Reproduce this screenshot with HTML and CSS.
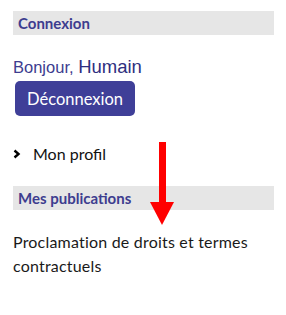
FILE: index.html
```html
<!DOCTYPE html>
<html lang="fr">
<head>
    <meta charset="UTF-8">
    <meta name="viewport" content="width=device-width, initial-scale=1.0">
    <title>Compte</title>
    <link rel="stylesheet" href="styles.css">
</head>
<body>
    <div class="sidebar">
        <h2 class="block-title">Connexion</h2>

        <div class="greeting">
            Bonjour, <span class="user">Humain</span>
        </div>
        <button class="logout">Déconnexion</button>

        <ul class="links">
            <li>
                <svg class="chevron" width="8" height="10" viewBox="0 0 8 10">
                    <polyline points="1.5,1.5 5.5,5 1.5,8.5" fill="none" stroke="#000" stroke-width="2.4"/>
                </svg>
                Mon profil
            </li>
        </ul>

        <h2 class="block-title">Mes publications</h2>

        <p class="pub">Proclamation de droits et termes contractuels</p>

        <!-- flèche ajoutée par dessus la capture -->
        <div class="arrow"></div>
    </div>
</body>
</html>
```

FILE: styles.css
```css
*{
    box-sizing: border-box;
}

body{
    margin: 0;
    background-color: white;
    font-family: "Lato", "Noto Sans", sans-serif;
}

.sidebar{
    position: relative;
    width: 274px;
    padding: 11px 0 0 13px;
}

.block-title{
    margin: 0;
    height: 24px;
    line-height: 24px;
    padding-left: 5px;
    background-color: #e6e6e6;
    color: #3d3d8f;
    font-size: 15px;
    font-weight: bold;
}

.greeting{
    margin-top: 22px;
    font-family: "Liberation Sans", Arial, sans-serif;
    font-size: 16.5px;
    line-height: 20px;
    color: #3d3d8f;
}

.user{
    font-size: 18.5px;
    color: #2f2f80;
}

.logout{
    display: block;
    margin: 4px 0 0 2px;
    width: 120px;
    height: 35px;
    border: none;
    border-radius: 5px;
    background-color: #3f3f98;
    color: white;
    font-family: "Lato", sans-serif;
    font-size: 16.5px;
}

.links{
    list-style: none;
    margin: 28px 0 0 0;
    padding: 0;
    font-size: 16px;
    color: #111;
}

.links li{
    display: flex;
    align-items: center;
    gap: 12px;
}

.chevron{
    flex: none;
}

.links + .block-title{
    margin-top: 23px;
}

.pub{
    margin: 20px 0 0 0;
    font-size: 16px;
    line-height: 24px;
    letter-spacing: 0.2px;
    color: #1a1a1a;
}

.arrow{
    position: absolute;
    left: 159px;
    top: 142px;
    width: 7px;
    height: 62px;
    background-color: #f00;
}

.arrow::after{
    content: "";
    position: absolute;
    left: -9px;
    top: 60px;
    border-left: 12.5px solid transparent;
    border-right: 12.5px solid transparent;
    border-top: 23px solid #f00;
}
```
